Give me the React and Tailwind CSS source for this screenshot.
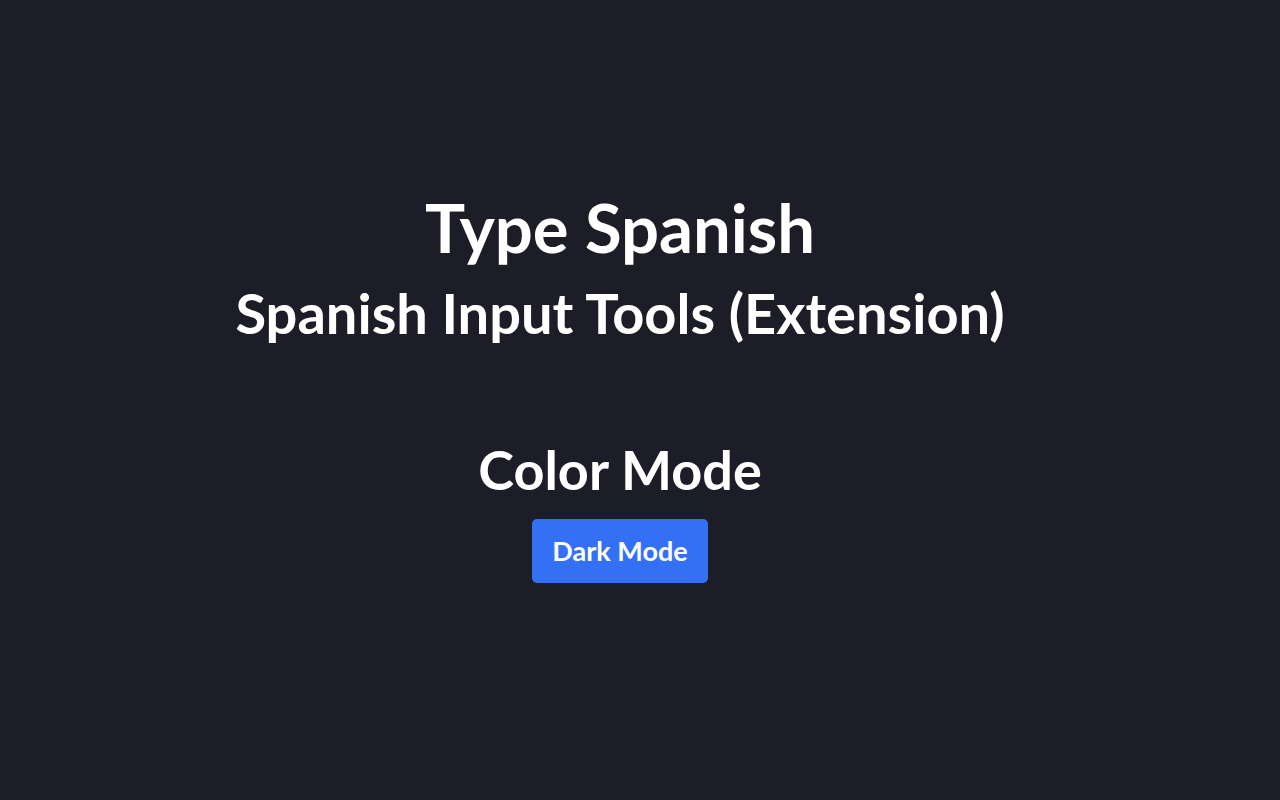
export default function App() {
  return (
    <div className="min-h-screen w-full bg-[#1d1d27] text-white flex flex-col items-center pr-[40px]" style={{ fontFamily: "Lato, 'Noto Sans', sans-serif" }}>
      <h1 className="mt-[187px] text-[67px] leading-[80px] font-bold">Type Spanish</h1>
      <h2 className="mt-[16px] text-[56px] leading-[60px] font-bold">Spanish Input Tools (Extension)</h2>
      <h3 className="mt-[97px] text-[54px] leading-[60px] font-bold">Color Mode</h3>
      <button className="mt-[19px] w-[176px] h-[64px] rounded-[5px] bg-[#3470f6] text-white text-[27px] font-bold">Dark Mode</button>
    </div>
  );
}
